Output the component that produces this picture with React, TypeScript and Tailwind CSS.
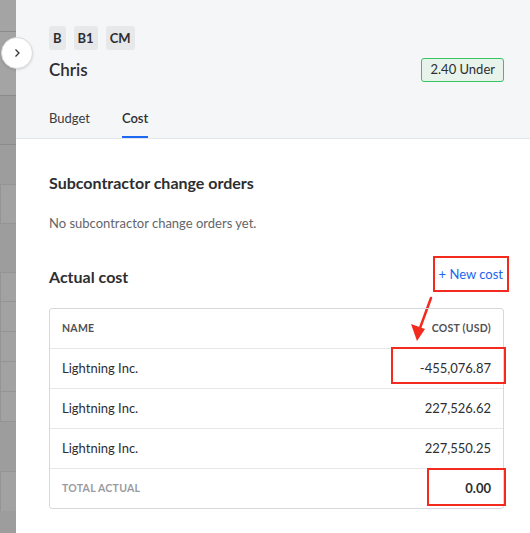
import React from 'react';

const rows = [
  { name: 'Lightning Inc.', cost: '-455,076.87' },
  { name: 'Lightning Inc.', cost: '227,526.62' },
  { name: 'Lightning Inc.', cost: '227,550.25' },
];

export default function App() {
  return (
    <div className="flex h-[533px] w-[530px] overflow-hidden bg-white text-[#2d2e31]" style={{ fontFamily: 'Lato, "Open Sans", sans-serif' }}>
      {/* dimmed page behind the drawer */}
      <div className="flex w-4 shrink-0 flex-col bg-[#9c9d9c]">
        <div className="h-[32px] border-b border-[#8a8b8a] bg-[#a3a4a3]" />
        <div className="h-[64px] border-b border-[#8a8b8a] bg-[#a3a4a3]" />
        <div className="h-[49px] border-b border-[#8a8b8a] bg-[#9a9b9a]" />
        <div className="mt-[39px] h-[40px] border-y border-l border-[#939493] bg-[#a1a2a1]" />
        <div className="mt-[48px] flex flex-col">
          <div className="h-[30px] border-y border-l border-[#939493] bg-[#a1a2a1]" />
          <div className="h-[30px] border-b border-l border-[#939493] bg-[#a1a2a1]" />
          <div className="h-[30px] border-b border-l border-[#939493] bg-[#a1a2a1]" />
          <div className="h-[30px] border-b border-l border-[#939493] bg-[#a1a2a1]" />
          <div className="h-[30px] border-b border-l border-[#939493] bg-[#a1a2a1]" />
        </div>
        <div className="mt-[49px] h-[40px] border-t border-l border-[#939493] bg-[#a1a2a1]" />
      </div>

      <div className="relative flex-1">
        {/* collapse button */}
        <button className="absolute left-[-15px] top-[37px] z-10 flex h-[32px] w-[32px] items-center justify-center rounded-full border border-[#d8dadd] bg-white shadow-sm">
          <svg width="10" height="10" viewBox="0 0 10 10" fill="none" stroke="#333" strokeWidth="1.3">
            <path d="M3.5 1.5 L7 5 L3.5 8.5" />
          </svg>
        </button>

        {/* header */}
        <div className="border-b border-[#e3e5e8] bg-[#f5f6f8] pl-[33px] pr-[26px] pt-[26px]">
          <div className="flex gap-2">
            {['B', 'B1', 'CM'].map((t) => (
              <span key={t} className="flex h-[24px] items-center rounded-[3px] bg-[#e7e8ea] px-[4px] text-[13px] font-bold leading-none">
                {t}
              </span>
            ))}
          </div>
          <div className="mt-2 flex h-[24px] items-center justify-between">
            <span className="text-[17px] font-semibold">Chris</span>
            <span className="flex h-[24px] items-center rounded-[3px] border border-[#35c563] bg-[#e8f3ec] px-[8px] text-[13px]">
              2.40 Under
            </span>
          </div>
          <div className="mt-[26px] flex gap-8 text-[13px] leading-5">
            <span className="border-b-2 border-transparent pb-[8px] text-[#3a3b3e]">Budget</span>
            <span className="border-b-2 border-[#1d68f2] pb-[8px] font-semibold">Cost</span>
          </div>
        </div>

        {/* body */}
        <div className="relative pl-[33px] pr-[26px] pt-[32px]">
          <h2 className="text-[16px] font-bold leading-6">Subcontractor change orders</h2>
          <p className="mt-[18px] text-[13px] leading-5 text-[#646569]">No subcontractor change orders yet.</p>

          <div className="mt-[23px] flex items-center justify-between">
            <h2 className="pt-[6px] text-[16px] font-bold leading-6">Actual cost</h2>
            <span className="-mr-[5px] border-2 border-[#f32b1f] px-[4px] py-[6px] text-[13px] leading-5 text-[#1b66f0]">
              + New cost
            </span>
          </div>

          {/* annotation arrow */}
          <svg className="absolute left-[392px] top-[157px]" width="30" height="46" viewBox="0 0 30 46">
            <path d="M23 2 L12 32" stroke="#f32b1f" strokeWidth="2.5" strokeLinecap="round" />
            <path d="M3 28 L17 33 L9 45 Z" fill="#f32b1f" />
          </svg>

          <div className="relative mt-[16px] rounded-[3px] border border-[#d6d8db]">
            <div className="flex h-[39px] items-center justify-between px-[12px] text-[10.5px] font-bold tracking-wide text-[#505155]">
              <span>NAME</span>
              <span>COST (USD)</span>
            </div>
            {rows.map((r, i) => (
              <div key={i} className="flex h-[40px] items-center justify-between border-t border-[#e6e7ea] px-[12px] text-[13px]">
                <span>{r.name}</span>
                <span>{r.cost}</span>
              </div>
            ))}
            <div className="flex h-[40px] items-center justify-between border-t border-[#e6e7ea] px-[12px]">
              <span className="text-[10.5px] font-bold tracking-wide text-[#9a9b9f]">TOTAL ACTUAL</span>
              <span className="text-[13px] font-bold">0.00</span>
            </div>

            {/* annotation boxes */}
            <div className="absolute left-[341px] top-[38px] h-[37px] w-[115px] border-2 border-[#f32b1f]" />
            <div className="absolute left-[377px] top-[159px] h-[38px] w-[79px] border-2 border-[#f32b1f]" />
          </div>
        </div>
      </div>
    </div>
  );
}
